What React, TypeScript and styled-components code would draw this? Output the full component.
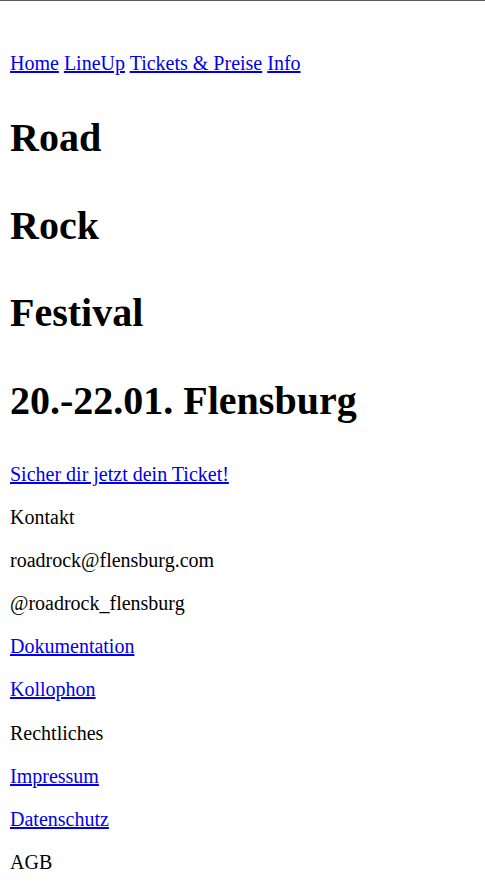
import React from "react";
import styled, { createGlobalStyle } from "styled-components";

const GlobalStyle = createGlobalStyle`
  html, body {
    margin: 0;
    padding: 0;
    background: #ffffff;
  }
  body {
    font-family: "Liberation Serif", "Times New Roman", serif;
    font-size: 20px;
    color: #000000;
  }
`;

const Page = styled.div`
  padding: 0 10px;
`;

const TopRule = styled.div`
  height: 1px;
  background: #5a5a5a;
  margin: 0 -10px;
`;

const Nav = styled.nav`
  margin-top: 51px;
  line-height: 23px;
`;

const Link = styled.a`
  color: #0000ee;
  text-decoration: underline;
`;

const TitleBlock = styled.header`
  margin-top: 40px;
  display: flex;
  flex-direction: column;
  gap: 41.5px;
`;

const Title = styled.h1`
  margin: 0;
  font-size: 40px;
  line-height: 46px;
  font-weight: bold;
`;

const Footer = styled.footer`
  margin-top: 39.5px;
  display: flex;
  flex-direction: column;
  gap: 20.1px;
`;

const Line = styled.p`
  margin: 0;
  line-height: 23px;
`;

export default function App() {
  return (
    <>
      <GlobalStyle />
      <TopRule />
      <Page>
        <Nav>
          <Link href="#">Home</Link> <Link href="#">LineUp</Link>{" "}
          <Link href="#">Tickets &amp; Preise</Link> <Link href="#">Info</Link>
        </Nav>
        <TitleBlock>
          <Title>Road</Title>
          <Title>Rock</Title>
          <Title>Festival</Title>
          <Title>20.-22.01. Flensburg</Title>
        </TitleBlock>
        <Footer>
          <Line>
            <Link href="#">Sicher dir jetzt dein Ticket!</Link>
          </Line>
          <Line>Kontakt</Line>
          <Line>roadrock@flensburg.com</Line>
          <Line>@roadrock_flensburg</Line>
          <Line>
            <Link href="#">Dokumentation</Link>
          </Line>
          <Line>
            <Link href="#">Kollophon</Link>
          </Line>
          <Line>Rechtliches</Line>
          <Line>
            <Link href="#">Impressum</Link>
          </Line>
          <Line>
            <Link href="#">Datenschutz</Link>
          </Line>
          <Line>AGB</Line>
        </Footer>
      </Page>
    </>
  );
}
